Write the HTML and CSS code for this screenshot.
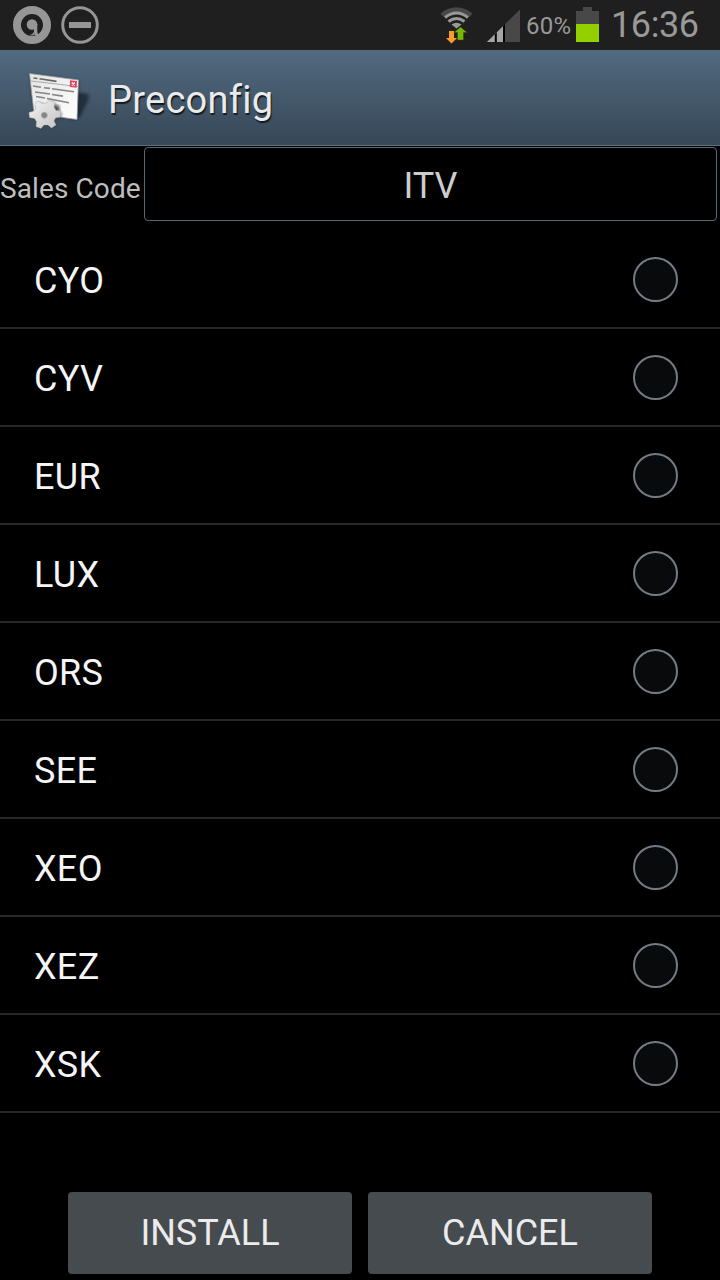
FILE: index.html
```html
<!DOCTYPE html>
<html lang="en">
<head>
<meta charset="utf-8">
<title>Preconfig</title>
<link rel="stylesheet" href="styles.css">
</head>
<body>
<div class="screen">
  <header class="status">
    <svg class="notices" width="110" height="50" viewBox="0 0 110 50">
      <circle cx="32" cy="25" r="15" fill="none" stroke="#969696" stroke-width="8"/>
      <circle cx="32" cy="24.500" r="5.300" fill="#969696"/>
      <path d="M34 24h3.300v8q0 2 2 2.500l-3 1.500q-2.300-1-2.300-4z" fill="#969696"/>
      <path d="M34.500 30v4.500q-2.500 1.500-5 .5 4-.5 5-5z" fill="#969696"/>
      <circle cx="80" cy="25" r="17.300" fill="none" stroke="#969696" stroke-width="3"/>
      <path d="M69 22h22v6H69z" fill="#969696"/>
    </svg>
    <svg class="signals" width="90" height="50" viewBox="435 0 90 50">
      <path d="M440.500 13.500Q456 1 472.500 13.500L469.500 17Q456 7 443.500 17z" fill="#484848"/>
      <g fill="none" stroke="#999" stroke-width="3">
        <path d="M445 17.500q11.500-9 23 0"/>
        <path d="M448.500 21.500q8-6 16 0"/>
      </g>
      <path d="M451.500 24.500q5-3.500 10 0l-5 4z" fill="#999"/>
      <path d="M449 31h5v7h3l-5.500 5.500L446 38h3z" fill="#ff9a2e"/>
      <path d="M457.500 40v-7.500H454L460.500 27l6.500 5.500h-3.500V40z" fill="#79b600" stroke="#2f4a00" stroke-width=".5"/>
      <path d="M487 42L520 9.500V42z" fill="#484848"/>
      <path d="M487 42L504 25.200V42z" fill="#a5a5a5"/>
      <path d="M494.800 34.200l2-2V42h-2zM503 26l2-2v18h-2z" fill="#000"/>
    </svg>
    <span class="percent">60%</span>
    <svg class="battery" width="24" height="50" viewBox="0 0 24 50">
      <path d="M0 11h7V7h9v4h7v13H0z" fill="#484848"/>
      <path d="M0 24h23v18H0z" fill="#92d000"/>
    </svg>
    <span class="clock">16:36</span>
  </header>
  <div class="title-bar">
    <svg class="app-icon" width="80" height="95" viewBox="20 50 80 95">
      <defs>
        <linearGradient id="paper" x1="0" y1="0" x2="1" y2="1"><stop offset="0" stop-color="#e4e4e4"/><stop offset="1" stop-color="#fff"/></linearGradient>
        <linearGradient id="metal" x1="0" y1="0" x2="1" y2="1"><stop offset="0" stop-color="#f2f2f2"/><stop offset="1" stop-color="#c4c4c4"/></linearGradient>
        <filter id="soft"><feGaussianBlur stdDeviation="1.500"/></filter>
      </defs>
      <path d="M76 92l12 2q2 3-1 9l-7 14-10 2z" fill="#17232e" opacity=".75" filter="url(#soft)"/>
      <path d="M29.500 74L79 81l-2 38-43-4z" fill="#182028" opacity=".6" filter="url(#soft)"/>
      <path d="M29.500 73.500L78.500 80 77 119.500l-43-6z" fill="url(#paper)" stroke="#999" stroke-width=".8"/>
      <path d="M31 81l47 5.500" stroke="#aaa"/>
      <path d="M33.500 78l4 .5m2 .3l17 2.600" stroke="#666" stroke-width="1.600"/>
      <path d="M33 86l8 1.200m3 .5l6 .7m2 .4l22 3M35 92l15 2m2 .5l11 1.600M36 96.500l9 1.500m2 .5l22 4.300" stroke="#858585" stroke-width="1.600"/>
      <path d="M70 80.200l7 .9-.4 6.700-6.800-.9z" fill="#e7425e"/>
      <path d="M71.800 82.500l3 3m0-3l-3 3" stroke="#fff" stroke-width="1.200"/>
      <path d="M53 106q7-3 7 4l-6 6z" fill="#555" filter="url(#soft)"/>
      <path d="M37.500 101l5 2.500 4-.5 2.500-3 6 2.500-1 4.500 2 3.500 4.500.5v6l-5 1-1.500 3 2 4-4.500 3-3.500-3h-4l-3 3.500-5-2 .5-5-2-3-5-1-.5-5 5-1.500 2-2.500-1-4z" transform="translate(1 1)" fill="#30363c" opacity=".6" filter="url(#soft)"/>
      <path d="M37.500 101l5 2.500 4-.5 2.500-3 6 2.500-1 4.500 2 3.500 4.500.5v6l-5 1-1.500 3 2 4-4.500 3-3.500-3h-4l-3 3.500-5-2 .5-5-2-3-5-1-.5-5 5-1.500 2-2.500-1-4z" fill="url(#metal)" stroke="#aaa" stroke-width=".4"/>
      <circle cx="44.300" cy="115.300" r="3" fill="#858585" stroke="#aaa"/>
    </svg>
    <h1 class="title">Preconfig</h1>
  </div>
  <div class="sales">
    <span class="sales-label">Sales Code</span>
    <div class="sales-value"><span>ITV</span></div>
  </div>
  <ul class="codes">
    <li class="code"><span class="name">CYO</span><i class="radio"></i></li>
    <li class="code"><span class="name">CYV</span><i class="radio"></i></li>
    <li class="code"><span class="name">EUR</span><i class="radio"></i></li>
    <li class="code"><span class="name">LUX</span><i class="radio"></i></li>
    <li class="code"><span class="name">ORS</span><i class="radio"></i></li>
    <li class="code"><span class="name">SEE</span><i class="radio"></i></li>
    <li class="code"><span class="name">XEO</span><i class="radio"></i></li>
    <li class="code"><span class="name">XEZ</span><i class="radio"></i></li>
    <li class="code"><span class="name">XSK</span><i class="radio"></i></li>
  </ul>
  <footer class="actions">
    <button class="action">INSTALL</button>
    <button class="action">CANCEL</button>
  </footer>
</div>
</body>
</html>
```
FILE: styles.css
```css
* { box-sizing: border-box; }
body { margin: 0; background: #000; font-family: Roboto, sans-serif; }
.screen { width: 720px; height: 1280px; display: flex; flex-direction: column; overflow: hidden; background: #000; }
svg { display: block; flex: none; }
.status { height: 50px; flex: none; display: flex; background: #1f1f1f; color: #999; }
.notices { margin-right: auto; }
.percent { width: 51px; padding-left: 1px; font-size: 24px; line-height: 52px; letter-spacing: .3px; }
.clock { width: 120px; padding-left: 11px; font-size: 36px; line-height: 50px; letter-spacing: -.4px; }
.title-bar { height: 96px; flex: none; display: flex; padding-left: 20px; background: linear-gradient(#526a80, #364757); border-bottom: 1px solid #5c7180; }
.title { margin: 0 0 0 8px; font-size: 38px; line-height: 101px; height: 95px; font-weight: 400; letter-spacing: .25px; font-variant-ligatures: none; color: #ebebeb; text-shadow: 1px 2px 1px #111a22; }
.sales { height: 85px; flex: none; display: flex; padding: 1px 3px 0 0; color: #bebebe; }
.sales-label { width: 144px; font-size: 28px; line-height: 84px; letter-spacing: .1px; white-space: nowrap; }
.sales-value { flex: 1; height: 74px; display: flex; justify-content: center; border: 1px solid #586975; border-radius: 4px; font-size: 36px; line-height: 77px; color: #cdcdcd; }
.codes { margin: 0; padding: 0; list-style: none; }
.code { height: 98px; display: flex; align-items: center; justify-content: space-between; padding: 0 42px 0 34px; border-bottom: 2px solid #272727; color: #f5f5f5; }
.name { font-size: 36px; line-height: 42px; padding-top: 3px; letter-spacing: .3px; }
.radio { width: 45px; height: 45px; margin-top: 1px; border: 2px solid #737b83; border-radius: 50%; background: #080a0c; }
.actions { margin-top: auto; padding: 0 68px 6px; display: flex; gap: 16px; }
.action { flex: 1; height: 82px; padding: 0; border: 0; border-radius: 4px; background: #464b4f; color: #ebebeb; font: 36px/82px Roboto, sans-serif; }
```
